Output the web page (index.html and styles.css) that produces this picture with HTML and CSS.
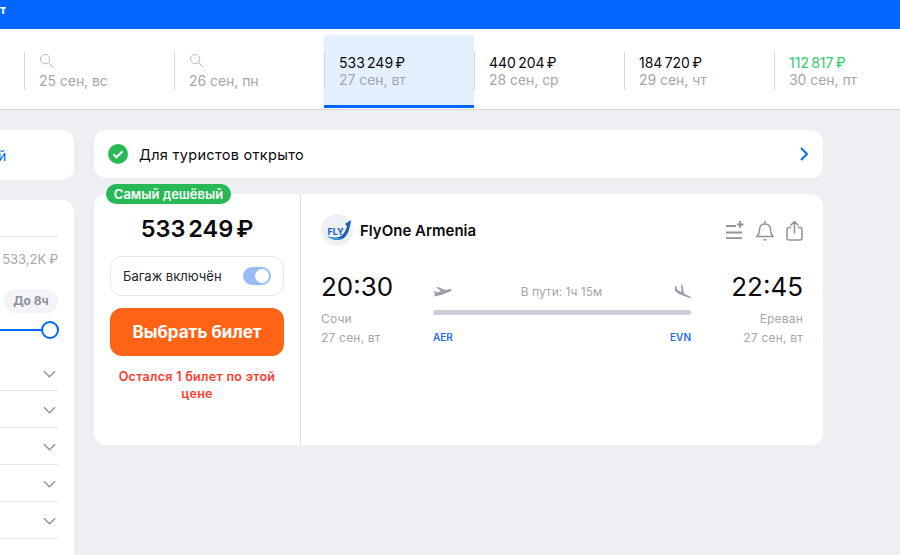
FILE: index.html
```html
<!DOCTYPE html>
<html lang="ru">
<head>
  <meta charset="UTF-8" />
  <meta name="viewport" content="width=device-width, initial-scale=1.0" />
  <title>Билеты</title>
  <link rel="stylesheet" href="styles.css">
</head>
<body>
  <header class="topbar"><span class="topbar-text">т</span></header>

  <div class="dates">
    <div class="date">
      <div class="date-in">
        <svg class="date-search" viewBox="0 0 16 16"><circle cx="6.5" cy="6.5" r="5" /><path d="M10.2 10.2 15 15" /></svg>
        <span class="date-day">25 сен, вс</span>
      </div>
    </div>
    <div class="date">
      <div class="date-in">
        <svg class="date-search" viewBox="0 0 16 16"><circle cx="6.5" cy="6.5" r="5" /><path d="M10.2 10.2 15 15" /></svg>
        <span class="date-day">26 сен, пн</span>
      </div>
    </div>
    <div class="date date-active">
      <div class="date-in">
        <span class="date-price">533 249 ₽</span>
        <span class="date-day">27 сен, вт</span>
      </div>
    </div>
    <div class="date">
      <div class="date-in">
        <span class="date-price">440 204 ₽</span>
        <span class="date-day">28 сен, ср</span>
      </div>
    </div>
    <div class="date">
      <div class="date-in">
        <span class="date-price">184 720 ₽</span>
        <span class="date-day">29 сен, чт</span>
      </div>
    </div>
    <div class="date">
      <div class="date-in">
        <span class="date-price date-price-low">112 817 ₽</span>
        <span class="date-day">30 сен, пт</span>
      </div>
    </div>
  </div>

  <div class="layout">
    <aside class="side">
      <div class="side-link"><a href="#">й</a></div>
      <div class="filters">
        <div class="range-label">533,2K ₽</div>
        <div class="pill-row"><span class="pill">До 8ч</span></div>
        <div class="slider"><span class="slider-knob"></span></div>
        <div class="filter-row"><svg class="chev" viewBox="0 0 14 8"><path d="M1 1l6 6 6-6" /></svg></div>
        <div class="filter-row"><svg class="chev" viewBox="0 0 14 8"><path d="M1 1l6 6 6-6" /></svg></div>
        <div class="filter-row"><svg class="chev" viewBox="0 0 14 8"><path d="M1 1l6 6 6-6" /></svg></div>
        <div class="filter-row"><svg class="chev" viewBox="0 0 14 8"><path d="M1 1l6 6 6-6" /></svg></div>
        <div class="filter-row"><svg class="chev" viewBox="0 0 14 8"><path d="M1 1l6 6 6-6" /></svg></div>
      </div>
    </aside>

    <main class="results">
      <div class="notice">
        <svg class="notice-check" viewBox="0 0 20 20"><circle cx="10" cy="10" r="10" /><path d="M5.5 10.3l3 3 6-6" /></svg>
        <span class="notice-text">Для туристов открыто</span>
        <svg class="notice-arrow" viewBox="0 0 8 14"><path d="M1 1l6 6-6 6" /></svg>
      </div>

      <div class="ticket">
        <span class="badge">Самый дешёвый</span>
        <div class="buy">
          <div class="buy-price">533 249 ₽</div>
          <div class="baggage">
            <span>Багаж включён</span>
            <span class="toggle"><span class="toggle-knob"></span></span>
          </div>
          <button class="buy-btn">Выбрать билет</button>
          <p class="buy-left">Остался 1 билет по этой цене</p>
        </div>

        <div class="flight">
          <div class="flight-head">
            <svg class="logo" viewBox="0 0 32 32">
              <circle cx="16" cy="16" r="16" fill="#eef0f5" />
              <path d="M6 22c6 5 14 5 18 1 3-3 5-9 6-17l-6 4 2 2c-1 4-3 8-6 10-4 2-9 2-14 0z" fill="#1b5fb5" />
              <path d="M6 22c5 4 12 5 17 2-5 .5-11 0-17-2z" fill="#3aa0e0" />
              <text x="6.500" y="20.500" class="logo-text">FLY</text>
            </svg>
            <span class="airline">FlyOne Armenia</span>
            <div class="actions">
              <svg viewBox="0 0 18 18" class="act act-list"><path d="M0 5h10M0 11.500h16M0 17.200h16M11 3.500h6.500M14.200 0v7" /></svg>
              <svg viewBox="0 0 18 21" class="act act-bell"><path d="M1 16.500h16c-1.500-1.500-2.500-3-2.500-6.500 0-3.500-2-6-5.500-6s-5.500 2.500-5.500 6C3.500 13.500 2.500 15 1 16.500zM9 1v3M7.500 19.700h3" /></svg>
              <svg viewBox="0 0 17 21" class="act act-share"><path d="M5 7.500H3a2 2 0 0 0-2 2v8.500a2 2 0 0 0 2 2h11a2 2 0 0 0 2-2V9.500a2 2 0 0 0-2-2h-2M8.500 13.500V1.500M4.500 5.500l4-4 4 4" /></svg>
            </div>
          </div>

          <div class="route">
            <div class="point">
              <div class="point-time">20:30</div>
              <div class="point-sub">Сочи</div>
              <div class="point-sub">27 сен, вт</div>
            </div>
            <div class="track">
              <div class="track-top">
                <svg class="plane plane-up" viewBox="0 0 19 11"><path d="M1 10.500 8 9l9-3.500C19 4.500 19.500 3 17 3l-4.500 1L5 1 3.500 1.500 8 5 4 6.500 1.500 5l-1 .5L2 8z" /></svg>
                <span class="track-dur">В пути: 1ч 15м</span>
                <svg class="plane plane-down" viewBox="0 0 17 15"><path d="M16.500 14.500c.5-1.500-.5-2-1.500-2.500L10 9.500 8.500 1 7 .5 7.500 8l-4-2-1-3.500L1 2v5l4 3z" /></svg>
              </div>
              <div class="track-line"></div>
              <div class="track-codes"><span>AER</span><span>EVN</span></div>
            </div>
            <div class="point point-end">
              <div class="point-time">22:45</div>
              <div class="point-sub">Ереван</div>
              <div class="point-sub">27 сен, вт</div>
            </div>
          </div>
        </div>
      </div>
    </main>
  </div>
</body>
</html>
```

FILE: styles.css
```css
* { box-sizing: border-box; margin: 0; padding: 0; }
html, body { height: 100%; overflow: hidden; }
body { background: #edeff3; color: #0b0b0f; font-family: 'Inter', 'Noto Sans', sans-serif; }

.topbar { background: #0066ff; height: 29px; color: white; font-size: 12px; font-weight: 700; line-height: 20px; }
.topbar-text { display: block; width: 6px; overflow: hidden; }

.dates { background: white; height: 81px; border-bottom: 1px solid #d3d5da; display: flex; padding: 6px 0 0 24px; align-items: flex-start; }
.date { width: 150px; height: 73px; padding-top: 17px; flex: none; }
.date-in { border-left: 1px solid #d6d8de; height: 38px; padding-left: 14px; display: flex; flex-direction: column; }
.date-active { background: #e4f0fd; border-bottom: 3px solid #0066ff; }
.date-price { font-size: 14px; line-height: 17px; margin-top: 2px; word-spacing: -1.7px; }
.date-price-low { color: #2fcb6a; }
.date-day { font-size: 14px; line-height: 17px; color: #a5a6b0; letter-spacing: -0.05px; }
.date-search { width: 15px; height: 15px; margin: 1px 0 4px; fill: none; stroke: #b3b5bc; stroke-width: 1; }

.layout { display: flex; gap: 20px; padding-top: 20px; }
.side { width: 74px; flex: none; }
.side-link { background: white; height: 50px; border-radius: 0 12px 12px 0; overflow: hidden; line-height: 50px; }
.side-link a { color: #0066ff; font-size: 14px; margin-left: -2px; text-decoration: none; }
.filters { background: white; height: 355px; margin-top: 20px; border-radius: 0 12px 0 0; padding: 36px 16px 0 0; }
.range-label { border-top: 1px solid #e4e5ea; padding-top: 14px; height: 53px; color: #a5a6b0; font-size: 13px; line-height: 17px; white-space: nowrap; word-spacing: -1px; text-align: right; }
.pill-row { display: flex; justify-content: flex-end; }
.pill { background: #f3f4f7; color: #8f909b; height: 24px; width: 54px; border-radius: 12px; font-size: 12px; font-weight: 700; line-height: 24px; text-align: center; }
.slider { height: 2px; margin-top: 16px; background: #0066ff; position: relative; }
.slider-knob { position: absolute; right: -1px; top: -8px; width: 18px; height: 18px; background: white; border: 2px solid #0066ff; border-radius: 50%; }
.filter-row { height: 37px; border-bottom: 1px solid #e4e5ea; display: flex; align-items: center; justify-content: flex-end; padding: 2px 2px 0 0; }
.filter-row:nth-child(4) { height: 60px; padding-top: 27px; }
.chev { width: 13px; height: 8px; fill: none; stroke: #8f939e; stroke-width: 1.500; }

.results { width: 729px; flex: none; }
.notice { background: white; height: 48px; border-radius: 12px; display: flex; align-items: center; padding: 0 15px 0 14px; }
.notice-check { width: 20px; height: 20px; }
.notice-check circle { fill: #26b955; }
.notice-check path { fill: none; stroke: white; stroke-width: 2; }
.notice-text { flex: 1; margin-left: 11px; font-size: 14.500px; letter-spacing: 0.3px; }
.notice-arrow { width: 8px; height: 14px; fill: none; stroke: #0c6ff0; stroke-width: 2; }

.ticket { background: white; height: 251px; margin-top: 16px; border-radius: 12px; display: flex; position: relative; }
.badge { position: absolute; left: 12px; top: -10px; height: 20px; width: 125px; background: #26b955; color: white; border-radius: 10px; font-size: 13px; font-weight: 600; line-height: 20px; text-align: center; }
.buy { width: 207px; flex: none; border-right: 1px solid #dcdee3; padding: 20px 16px 0; }
.buy-price { font-size: 23.500px; font-weight: 600; line-height: 30px; text-align: center; word-spacing: -3px; }
.baggage { border: 1px solid #e4e5ea; border-radius: 12px; height: 40px; margin-top: 12px; padding: 0 12px; display: flex; align-items: center; justify-content: space-between; font-size: 13px; color: #24242c; }
.toggle { background: #95bcf9; width: 28px; height: 18px; border-radius: 9px; padding: 2px; display: flex; justify-content: flex-end; }
.toggle-knob { background: white; width: 14px; height: 14px; border-radius: 50%; }
.buy-btn { display: block; width: 100%; height: 48px; margin-top: 12px; background: #ff6316; color: white; border: none; border-radius: 12px; font-family: inherit; font-size: 17px; font-weight: 700; }
.buy-left { margin-top: 12px; color: #ff3b30; font-size: 12.500px; font-weight: 600; line-height: 17px; text-align: center; letter-spacing: 0.3px; }

.flight { flex: 1; padding: 20px 20px 0; }
.flight-head { display: flex; align-items: center; height: 32px; }
.logo { width: 32px; height: 32px; flex: none; }
.logo-text { font-family: 'Inter', sans-serif; font-size: 9px; font-weight: 800; fill: #2a6fd0; }
.airline { margin-left: 7px; font-size: 15px; font-weight: 600; flex: 1; }
.actions { display: flex; gap: 12px; align-items: center; }
.act { fill: none; stroke: #8f939e; stroke-width: 1.800; }
.act-list { width: 18px; height: 18px; }
.act-bell { width: 18px; height: 21px; stroke-width: 1.500; }
.act-share { width: 17px; height: 21px; stroke-width: 1.500; }

.route { display: flex; margin-top: 25px; }
.point { width: 92px; flex: none; }
.point-time { font-size: 26px; line-height: 32px; margin-bottom: 6px; }
.point-sub { color: #a5a6b0; font-size: 12px; line-height: 19px; letter-spacing: 0.2px; }
.point-end { text-align: right; }
.track { width: 258px; flex: none; margin: 0 20px; }
.track-top { display: flex; justify-content: space-between; align-items: center; height: 22px; margin-top: 9px; }
.track-dur { color: #a5a6b0; font-size: 12px; margin-right: 3px; }
.plane { fill: #9a9ea9; }
.plane-up { width: 19px; height: 11px; }
.plane-down { width: 17px; height: 15px; }
.track-line { height: 5px; background: #c9ced9; border-radius: 3px; margin-top: 8px; }
.track-codes { display: flex; justify-content: space-between; margin-top: 15px; color: #1f6ef0; font-size: 10px; font-weight: 600; line-height: 14px; }
```
